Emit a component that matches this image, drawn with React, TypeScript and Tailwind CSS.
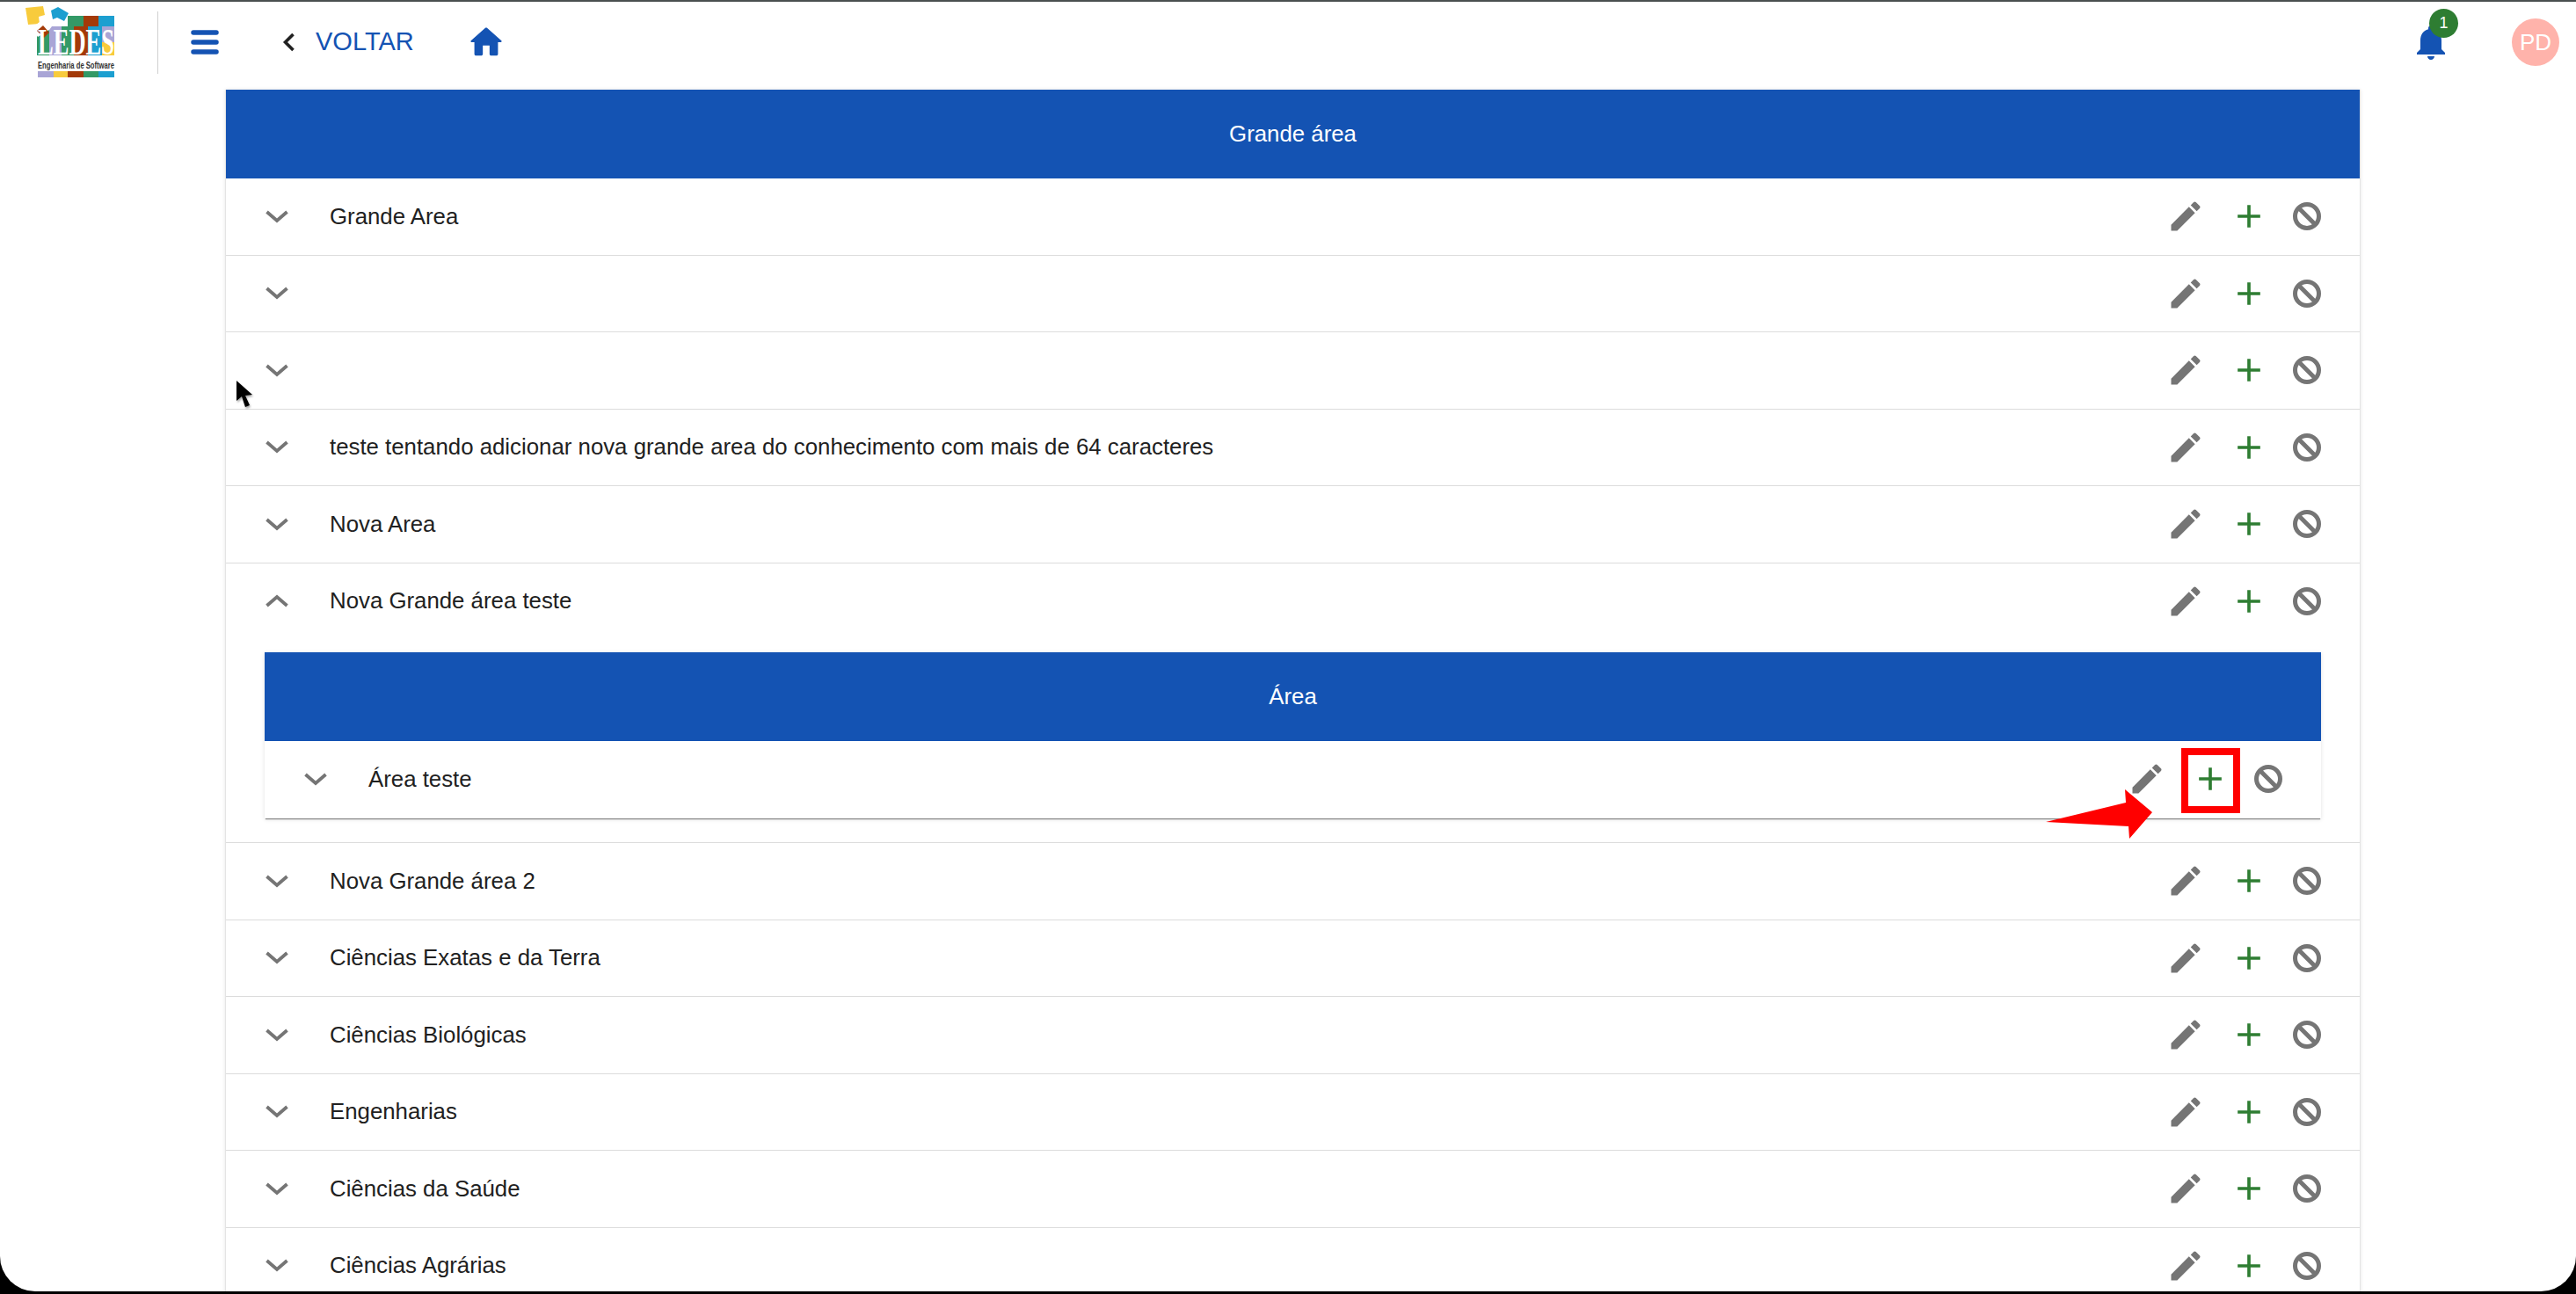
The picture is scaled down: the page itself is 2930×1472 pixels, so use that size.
const BLUE = "#1453b3";

const grandeAreasTop = [
  "Grande Area",
  "",
  "",
  "teste tentando adicionar nova grande area do conhecimento com mais de 64 caracteres",
  "Nova Area",
];

const grandeAreasBottom = [
  "Nova Grande área 2",
  "Ciências Exatas e da Terra",
  "Ciências Biológicas",
  "Engenharias",
  "Ciências da Saúde",
  "Ciências Agrárias",
];

const Logo = () => (
  <svg width="102" height="82" viewBox="0 0 102 82" className="shrink-0 overflow-visible">
    <rect x="49" y="11" width="18" height="12" fill="#339966" />
    <rect x="67" y="11" width="17" height="12" fill="#a33a08" />
    <rect x="84" y="11" width="18" height="12" fill="#1c9fd0" />
    <rect x="14" y="23" width="14" height="33" fill="#339966" />
    <rect x="28" y="23" width="14" height="33" fill="#a9a5d6" />
    <rect x="42" y="23" width="14" height="33" fill="#339966" />
    <rect x="56" y="23" width="16" height="33" fill="#a33a08" />
    <rect x="72" y="23" width="16" height="33" fill="#1c9fd0" />
    <rect x="88" y="23" width="14" height="18" fill="#a9a5d6" />
    <rect x="88" y="41" width="14" height="15" fill="#f8cb3c" />
    <path d="M1 2 L21 0 L23 10 L16 12 L17 20 L4 21 Z" fill="#f8cb3c" />
    <path d="M30 5 L38 1 L50 8 L45 17 L37 13 L32 15 Z" fill="#1c9fd0" />
    <path d="M8 25 L22 14 L31 23 L28 27 L15 35 Z" fill="#ffffff" />
    <path d="M14 28 L21 22 L28 30 L22 36 Z" fill="#a33a08" />
    <text
      x="15"
      y="55"
      textLength="87"
      lengthAdjust="spacingAndGlyphs"
      fill="#ffffff"
      className="font-['Liberation_Serif',serif] text-[42px] font-bold"
    >
      LEDES
    </text>
    <text
      x="15"
      y="71"
      textLength="87"
      lengthAdjust="spacingAndGlyphs"
      fill="#333333"
      className="font-['Liberation_Sans',sans-serif] text-[10px] font-bold"
    >
      Engenharia de Software
    </text>
    <rect x="15" y="74" width="18" height="7" fill="#a9a5d6" />
    <rect x="33" y="74" width="16" height="7" fill="#f8cb3c" />
    <rect x="49" y="74" width="18" height="7" fill="#a33a08" />
    <rect x="67" y="74" width="17" height="7" fill="#339966" />
    <rect x="84" y="74" width="18" height="7" fill="#1c9fd0" />
  </svg>
);

const TopBar = () => (
  <header className="relative flex h-[100px] items-center pb-[8px]">
    <div className="ml-[28px] w-[102px]">
      <Logo />
    </div>
    <div className="ml-[49px] h-[71px] w-px bg-[#d0d0d0]" />
    <svg width="32" height="28" viewBox="0 0 32 28" className="ml-[37px]">
      <path d="M3 3h26M3 14h26M3 25h26" stroke={BLUE} strokeWidth="5.5" strokeLinecap="round" />
    </svg>
    <svg width="15" height="22" viewBox="0 0 15 22" className="ml-[72px]">
      <path d="M12.5 2 L3.5 11 L12.5 20" fill="none" stroke="#212121" strokeWidth="3.6" />
    </svg>
    <span className="ml-[23px] text-[29px] text-[#1453b3]">VOLTAR</span>
    <svg width="46" height="46" viewBox="0 0 24 24" fill={BLUE} className="ml-[59px]">
      <path d="M10 19v-5h4v5c0 .55.45 1 1 1h3c.55 0 1-.45 1-1v-7h1.7c.46 0 .68-.57.33-.87L12.67 3.6c-.38-.34-.96-.34-1.34 0l-8.36 7.53c-.34.3-.13.87.33.87H5v7c0 .55.45 1 1 1h3c.55 0 1-.45 1-1z" />
    </svg>
    <div className="ml-auto mr-[19px] flex items-center">
      <div className="relative mr-[68px] h-[48px] w-[48px]">
        <svg width="48" height="48" viewBox="0 0 24 24" fill={BLUE}>
          <path d="M12 22c1.1 0 2-.9 2-2h-4c0 1.1.89 2 2 2zm6-6v-5c0-3.07-1.64-5.64-4.5-6.32V4c0-.83-.67-1.5-1.5-1.5s-1.5.67-1.5 1.5v.68C7.63 5.36 6 7.92 6 11v5l-2 2v1h16v-1l-2-2z" />
        </svg>
        <span className="absolute left-[22px] top-[-14px] flex h-[33px] w-[33px] items-center justify-center rounded-full bg-[#2e7d32] text-[18px] text-white">
          1
        </span>
      </div>
      <div className="flex h-[54px] w-[54px] items-center justify-center rounded-full bg-[#ffb3ab] text-[26px] text-white">
        PD
      </div>
    </div>
  </header>
);

const Chevron = ({ up = false }: { up?: boolean }) => (
  <svg width="26" height="15" viewBox="0 0 26 15" className={up ? "rotate-180" : ""}>
    <path d="M1.5 2 L13 12 L24.5 2" fill="none" stroke="#757575" strokeWidth="3.8" />
  </svg>
);

const Actions = () => (
  <div className="ml-auto flex items-center">
    <svg width="44" height="44" viewBox="0 0 24 24" fill="#757575">
      <path d="M3 17.25V21h3.75L17.81 9.94l-3.75-3.75L3 17.25zM20.71 7.04c.39-.39.39-1.02 0-1.41l-2.34-2.34a.9959.9959 0 0 0-1.41 0l-1.83 1.83 3.75 3.75 1.83-1.83z" />
    </svg>
    <svg width="44" height="44" viewBox="0 0 24 24" fill="#2e7d32" className="ml-[28px]">
      <path d="M19 13h-6v6h-2v-6H5v-2h6V5h2v6h6v2z" />
    </svg>
    <svg width="38" height="38" viewBox="0 0 38 38" className="ml-[25px]" fill="none" stroke="#757575" strokeWidth="5">
      <circle cx="19" cy="19" r="13.5" />
      <path d="M9.5 9.5 L28.5 28.5" />
    </svg>
  </div>
);

const RowLine = ({ label, up = false }: { label: string; up?: boolean }) => (
  <div className="flex h-[86.5px] shrink-0 items-center pl-[45px] pr-[41px]">
    <Chevron up={up} />
    <span className="ml-[47px] text-[25.8px] text-[#212121]">{label}</span>
    <Actions />
  </div>
);

const AreaRow = ({ label }: { label: string }) => (
  <div className="border-b border-[#dcdcdc]">
    <RowLine label={label} />
  </div>
);

const BlueHead = ({ title }: { title: string }) => (
  <div className="flex h-[101px] items-center justify-center bg-[#1453b3] text-[25.8px] text-white">
    {title}
  </div>
);

const ExpandedRow = () => (
  <div className="relative border-b border-[#dcdcdc] pb-[27px]">
    <RowLine label="Nova Grande área teste" up />
    <div className="mx-[44px] mt-[15px] bg-white pb-[1.5px] shadow-[0_2px_1px_-1px_rgba(0,0,0,0.45),0_1px_5px_rgba(0,0,0,0.12)]">
      <BlueHead title="Área" />
      <RowLine label="Área teste" />
    </div>
    {/* anotacao vermelha */}
    <div className="absolute left-[2224px] top-[210px] h-[74px] w-[67px] border-[8px] border-[#ff0000]" />
    <svg width="124" height="58" viewBox="0 0 124 58" className="absolute left-[2070px] top-[257px]">
      <path d="M0 37 L91 15 L90 0 L121 26 L95 56 L94 42 Z" fill="#ff0000" />
    </svg>
  </div>
);

const Cursor = () => (
  <svg width="22" height="34" viewBox="0 0 22 34" className="absolute left-[268px] top-[432px] drop-shadow-[1px_2px_1px_rgba(0,0,0,0.35)]">
    <path d="M1 1 L1 24 L7 19 L11 31 L16 29 L11 18 L19 17 Z" fill="#000000" />
  </svg>
);

export default function App() {
  return (
    <div className="relative h-[1472px] overflow-hidden bg-black font-['Liberation_Sans',sans-serif]">
      <div className="h-[1469px] overflow-hidden rounded-b-[40px] border-t-2 border-[#4a4f4f] bg-white">
        <TopBar />
        <main className="ml-[256px] w-[2429px] border-x border-[#e4e4e4] shadow-[0_0_4px_rgba(0,0,0,0.1)]">
          <BlueHead title="Grande área" />
          {grandeAreasTop.map((label, i) => (
            <AreaRow key={i} label={label} />
          ))}
          <ExpandedRow />
          {grandeAreasBottom.map((label) => (
            <AreaRow key={label} label={label} />
          ))}
        </main>
      </div>
      <Cursor />
    </div>
  );
}
